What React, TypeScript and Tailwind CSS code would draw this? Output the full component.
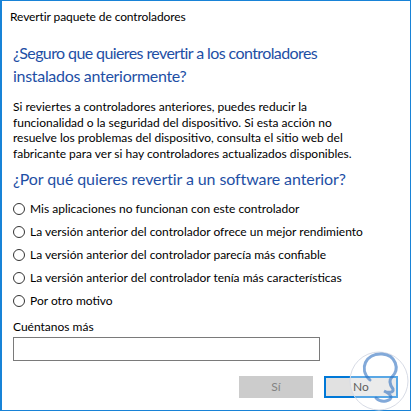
import React from "react";

const font = { fontFamily: '"Segoe UI", Lato, "Noto Sans", sans-serif' };

function Radio({ label }: { label: string }) {
  return (
    <div className="flex items-center h-[23px]">
      <span className="w-[12px] h-[12px] rounded-full border border-[#333] bg-white shrink-0" />
      <span className="ml-[5px] text-[12px] text-black">{label}</span>
    </div>
  );
}

export default function App() {
  return (
    <div className="w-[412px] h-[412px] bg-white" style={font}>
      <div className="w-[411px] h-[411px] border border-l-2 border-[#1883d7] flex flex-col relative box-border">
        <div className="h-[31px] pl-[8px] flex items-center text-[12px] text-black tracking-[-0.1px]">
          Revertir paquete de controladores
        </div>
        <div className="pl-[11px] pr-[10px] flex flex-col">
          <div className="mt-[9px] text-[16px] leading-[23px] text-[#1e4fa5]">
            <span className="tracking-[-0.6px]">¿Seguro que quieres revertir a los controladores</span>
            <br />
            <span className="tracking-[-0.3px]">instalados anteriormente?</span>
          </div>
          <div className="mt-[12px] text-[12px] leading-[15.5px] text-black">
            Si reviertes a controladores anteriores, puedes reducir la
            <br />
            funcionalidad o la seguridad del dispositivo. Si esta acción no
            <br />
            resuelve los problemas del dispositivo, consulta el sitio web del
            <br />
            fabricante para ver si hay controladores actualizados disponibles.
          </div>
          <div className="mt-[6px] text-[16px] leading-[23px] text-[#1e4fa5] tracking-[-0.1px]">
            ¿Por qué quieres revertir a un software anterior?
          </div>
          <div className="mt-[7px] flex flex-col">
            <Radio label="Mis aplicaciones no funcionan con este controlador" />
            <Radio label="La versión anterior del controlador ofrece un mejor rendimiento" />
            <Radio label="La versión anterior del controlador parecía más confiable" />
            <Radio label="La versión anterior del controlador tenía más características" />
            <Radio label="Por otro motivo" />
          </div>
          <div className="mt-[7px] text-[12px] leading-[16px] text-black">Cuéntanos más</div>
          <div className="mt-[2px] w-[307px] h-[24px] border border-[#7a7a7a] bg-white" />
          <div className="mt-[15px] flex justify-end pr-[2px] gap-[11px]">
            <div className="w-[74px] h-[22px] bg-[#cccccc] flex items-center justify-center text-[12px] text-[#838383]">
              Sí
            </div>
            <div className="w-[74px] h-[22px] bg-[#e1e1e1] border-2 border-[#0078d7] flex items-center justify-center text-[12px] text-black">
              No
            </div>
          </div>
        </div>
        <svg className="absolute left-[346px] top-[346px] pointer-events-none" width="64" height="64" viewBox="0 0 64 64">
          <circle cx="31" cy="34" r="29" fill="rgba(255,255,255,0.35)" stroke="#d8dce6" strokeWidth="1" />
          <path
            d="M22 33 C10 22, 18 6, 34 7 C48 8, 52 22, 44 30 C40 34, 42 38, 45 42 C46 46, 40 46, 36 44 C44 48, 46 52, 38 54 C34 55, 30 53, 28 51"
            fill="none"
            stroke="#2f6fc0"
            strokeOpacity="0.6"
            strokeWidth="3"
            strokeLinecap="round"
          />
        </svg>
      </div>
    </div>
  );
}
